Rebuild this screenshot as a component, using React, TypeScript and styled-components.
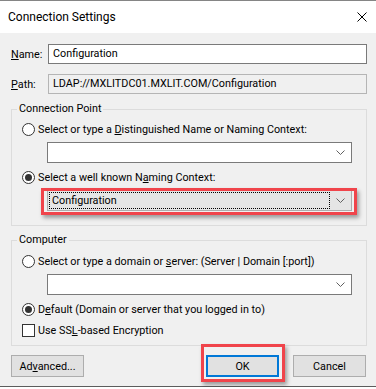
import React from 'react';
import styled, { createGlobalStyle } from 'styled-components';

const GlobalStyle = createGlobalStyle`
  html, body {
    margin: 0;
    padding: 0;
    background: #ffffff;
  }
  body {
    font-family: Roboto, "Liberation Sans", sans-serif;
    font-size: 10.8px;
    color: #000000;
  }
`;

const Window = styled.div`
  box-sizing: border-box;
  width: 376px;
  height: 387px;
  border-top: 1px solid #858585;
  border-bottom: 1px solid #5c5c5c;
  background: #f0f0f0;
  display: flex;
  flex-direction: column;
`;

const TitleBar = styled.div`
  flex: none;
  height: 32px;
  padding: 0 9px 0 8px;
  background: #ffffff;
  display: flex;
  align-items: center;
  justify-content: space-between;
  font-size: 12px;
`;

const Body = styled.div`
  flex: 1;
  padding: 11px 9px 0 11px;
  display: flex;
  flex-direction: column;
`;

const Field = styled.div`
  display: grid;
  grid-template-columns: 37px 1fr;
  align-items: center;
  & + & {
    margin-top: 10px;
  }
`;

const TextBox = styled.div<{ $readOnly?: boolean }>`
  box-sizing: border-box;
  height: 20px;
  padding: 0 4px;
  line-height: 18px;
  white-space: nowrap;
  border: 1px solid ${p => (p.$readOnly ? '#b5b5b5' : '#7a7a7a')};
  background: ${p => (p.$readOnly ? '#f0f0f0' : '#ffffff')};
`;

const Key = styled.u`
  text-decoration: underline;
  text-underline-offset: 1px;
`;

const Group = styled.fieldset<{ $top: number }>`
  min-width: 0;
  margin: ${p => p.$top}px 0 0 0;
  padding: 0;
  border: 1px solid #dcdcdc;
`;

const Legend = styled.legend`
  margin-left: 5px;
  padding: 0 2px;
  line-height: 14px;
`;

const GroupBody = styled.div<{ $padTop: number; $padBottom: number }>`
  padding: ${p => p.$padTop}px 13px ${p => p.$padBottom}px 10px;
  display: flex;
  flex-direction: column;
  gap: 5px;
`;

const Option = styled.div`
  height: 16px;
  display: flex;
  align-items: center;
  gap: 3px;
  white-space: nowrap;
`;

const Radio = styled.span<{ $checked?: boolean }>`
  flex: none;
  box-sizing: border-box;
  width: 13px;
  height: 13px;
  border: 1px solid #333333;
  border-radius: 50%;
  background: #ffffff;
  display: flex;
  align-items: center;
  justify-content: center;
  &::after {
    content: '';
    width: 7px;
    height: 7px;
    border-radius: 50%;
    background: #333333;
    display: ${p => (p.$checked ? 'block' : 'none')};
  }
`;

const Check = styled.span`
  flex: none;
  box-sizing: border-box;
  width: 13px;
  height: 13px;
  border: 1px solid #333333;
  background: #ffffff;
`;

const Indent = styled.div`
  width: 305px;
  margin: 0 0 1px 25px;
`;

const Marked = styled.div<{ $inset: string }>`
  position: relative;
  display: flex;
  &::after {
    content: '';
    position: absolute;
    inset: ${p => p.$inset};
    border: 3px solid #f0444b;
    box-shadow: 2px 3px 4px rgba(0, 0, 0, 0.35);
    pointer-events: none;
  }
`;

const Combo = styled.div<{ $list?: boolean }>`
  box-sizing: border-box;
  width: 305px;
  height: 21px;
  padding: 1px 0 1px 1px;
  display: flex;
  border: 1px solid ${p => (p.$list ? '#adadad' : '#7a7a7a')};
  background: ${p => (p.$list ? '#e5e5e5' : '#ffffff')};
`;

const ComboText = styled.div<{ $focused?: boolean }>`
  flex: 1;
  box-sizing: border-box;
  padding-left: 2px;
  line-height: 15px;
  white-space: nowrap;
  border: 1px dotted ${p => (p.$focused ? '#000000' : 'transparent')};
`;

const ComboArrow = styled.div`
  flex: none;
  width: 21px;
  display: flex;
  align-items: center;
  justify-content: center;
`;

const ButtonRow = styled.div`
  margin-top: 9px;
  padding-right: 1px;
  display: flex;
  align-items: center;
  gap: 14px;
`;

const Spacer = styled.div`
  flex: 1;
`;

const Button = styled.button<{ $default?: boolean }>`
  box-sizing: border-box;
  width: 73px;
  height: 22px;
  padding: 0;
  font: inherit;
  color: #000000;
  background: #e1e1e1;
  border: ${p => (p.$default ? '2px solid #0078d7' : '1px solid #adadad')};
`;

const Chevron = () => (
  <svg width="9" height="5" viewBox="0 0 9 5">
    <polyline points="0.5,0.5 4.5,4.5 8.5,0.5" fill="none" stroke="#606060" strokeWidth="1" />
  </svg>
);

const CloseIcon = () => (
  <svg width="10" height="10" viewBox="0 0 10 10">
    <path d="M0.5 0.5 L9.5 9.5 M9.5 0.5 L0.5 9.5" stroke="#000000" strokeWidth="1" />
  </svg>
);

const ComboBox = ({ value, list, focused }: { value?: string; list?: boolean; focused?: boolean }) => (
  <Combo $list={list}>
    <ComboText $focused={focused}>{value}</ComboText>
    <ComboArrow>
      <Chevron />
    </ComboArrow>
  </Combo>
);

export default function App() {
  return (
    <>
      <GlobalStyle />
      <Window>
        <TitleBar>
          <span>Connection Settings</span>
          <CloseIcon />
        </TitleBar>
        <Body>
          <Field>
            <span><Key>N</Key>ame:</span>
            <TextBox>Configuration</TextBox>
          </Field>
          <Field>
            <span><Key>P</Key>ath:</span>
            <TextBox $readOnly>LDAP://MXLITDC01.MXLIT.COM/Configuration</TextBox>
          </Field>

          <Group $top={8}>
            <Legend>Connection Point</Legend>
            <GroupBody $padTop={5} $padBottom={13}>
              <Option>
                <Radio />
                <span>Select or type a <Key>D</Key>istinguished Name or Naming Context:</span>
              </Option>
              <Indent>
                <ComboBox />
              </Indent>
              <Option>
                <Radio $checked />
                <span>Select a well known N<Key>a</Key>ming Context:</span>
              </Option>
              <Indent>
                <Marked $inset="-2px -5px -4px -6px">
                  <ComboBox list focused value="Configuration" />
                </Marked>
              </Indent>
            </GroupBody>
          </Group>

          <Group $top={7}>
            <Legend>Computer</Legend>
            <GroupBody $padTop={6} $padBottom={7}>
              <Option>
                <Radio />
                <span>Select or type a domain or <Key>s</Key>erver: (Server | Domain [:port])</span>
              </Option>
              <Indent>
                <ComboBox />
              </Indent>
              <Option>
                <Radio $checked />
                <span>D<Key>e</Key>fault (Domain or server that you logged in to)</span>
              </Option>
              <Option>
                <Check />
                <span>Use SS<Key>L</Key>-based Encryption</span>
              </Option>
            </GroupBody>
          </Group>

          <ButtonRow>
            <Button>Ad<Key>v</Key>anced...</Button>
            <Spacer />
            <Marked $inset="-11px -6px -5px -5px">
              <Button $default>OK</Button>
            </Marked>
            <Button>Cancel</Button>
          </ButtonRow>
        </Body>
      </Window>
    </>
  );
}
